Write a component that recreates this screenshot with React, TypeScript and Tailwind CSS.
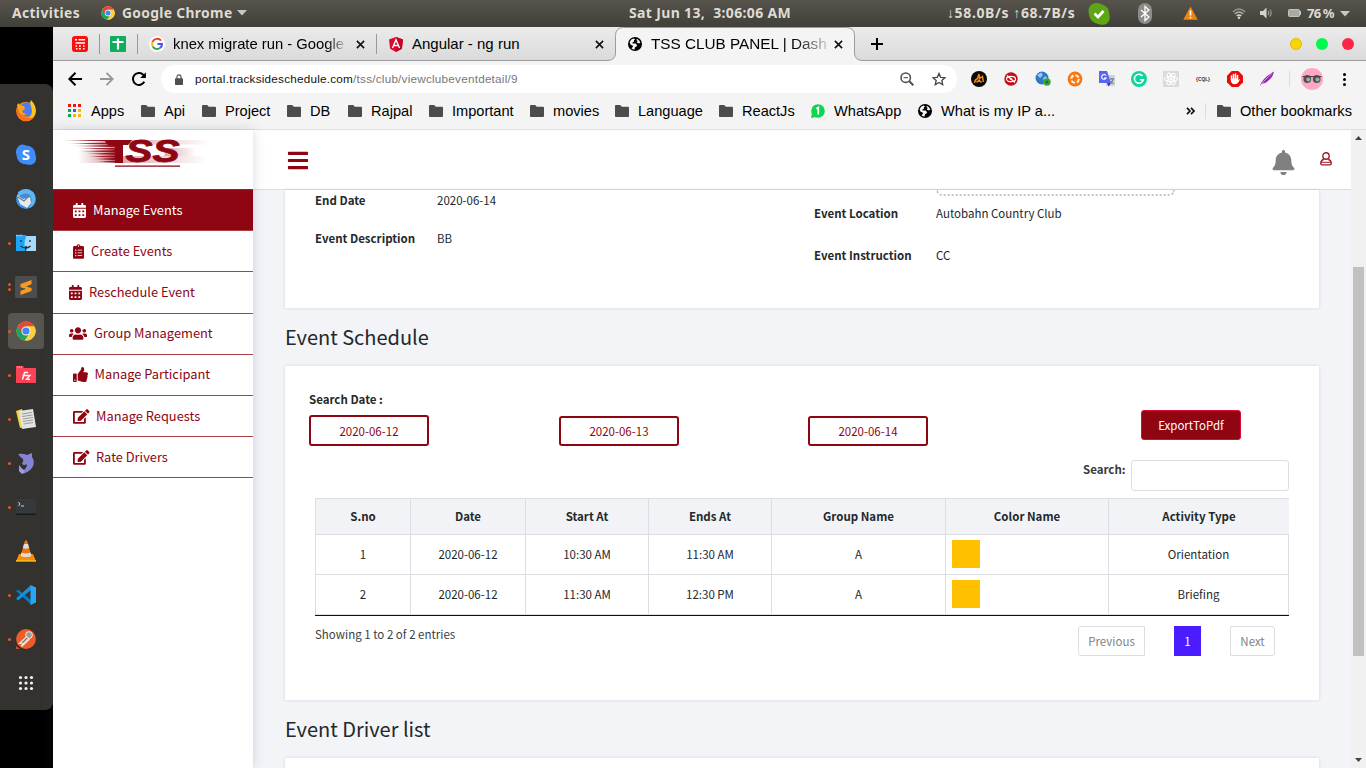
import React from "react";
import {
  FaCalendarAlt,
  FaClipboardList,
  FaUsers,
  FaThumbsUp,
  FaEdit,
  FaBars,
  FaBell,
} from "react-icons/fa";

type IconProps = { className?: string };

/* ---------- shared glyphs ---------- */

const ChromeLogo = ({ className }: IconProps) => (
  <svg viewBox="0 0 48 48" className={className}>
    <circle cx="24" cy="24" r="23" fill="#fbd03f" />
    <path d="M24 24 L4 12.5 A23 23 0 0 0 21 46.8 L33 29 Z" fill="#22a45d" />
    <path d="M24 13 H44.3 A23 23 0 0 0 4 12.5 L14.5 30 Z" fill="#e04a3f" />
    <path d="M24 13 H44.3 A23 23 0 0 1 21 46.8 L33.5 29.5 Z" fill="#fbd03f" />
    <circle cx="24" cy="24" r="11" fill="#f3f3f3" />
    <circle cx="24" cy="24" r="8.6" fill="#4285f4" />
  </svg>
);

const Globe = ({ className }: IconProps) => (
  <svg viewBox="0 0 14 14" className={className}>
    <circle cx="7" cy="7" r="7" fill="#000" />
    <path d="M1.600 5.200 Q2.600 2.400 5.400 1.500 L7.200 2.200 L5.800 3.200 L6.200 4.600 L4.400 5.600 L4.600 6.600 L7.600 6.600 L9.200 8.200 L8.400 9.600 L7 10.200 L6.600 12.500 Q4.500 12.500 3.400 11.200 L5 9.800 L4.600 8.400 L2.600 7.800 Z" fill="#f4f4f4" />
    <path d="M8.800 1.800 Q11.400 2.800 12.300 5.600 L11 6.400 L8.600 5.400 L9.800 4 L8.600 3.200 Z" fill="#f4f4f4" />
  </svg>
);

const Folder = ({ className }: IconProps) => (
  <svg viewBox="0 0 14 12" className={className}>
    <path d="M1 0 H5.2 L6.8 1.7 H13 Q14 1.7 14 2.7 V11 Q14 12 13 12 H1 Q0 12 0 11 V1 Q0 0 1 0 Z" fill="#4c4c4c" />
  </svg>
);

const Cross = () => (
  <svg viewBox="0 0 10 10" className="h-[9px] w-[9px] shrink-0">
    <path d="M1 1 L9 9 M9 1 L1 9" stroke="#111" strokeWidth="1.8" />
  </svg>
);

const Caret = ({ className }: IconProps) => (
  <svg viewBox="0 0 10 6" className={className}>
    <path d="M0 0 H10 L5 5.5 Z" fill="#c9c7c1" />
  </svg>
);

/* ---------- desktop top bar ---------- */

function TopBar() {
  return (
    <header className="flex h-[27px] shrink-0 items-center bg-gradient-to-b from-[#57544c] to-[#403f3a] pb-px font-['Noto_Sans',sans-serif] text-[14px] font-bold leading-[26px] whitespace-pre text-[#dfdbd2]">
      <span className="w-[89px] pl-3 text-[13.800px] tracking-[0.4px]">Activities</span>
      <ChromeLogo className="ml-3 h-[14px] w-[14px]" />
      <span className="ml-[7px] w-[113px] text-[13.800px] tracking-[0.350px]">Google Chrome</span>
      <Caret className="ml-[2px] h-[6px] w-[10px]" />
      <span className="ml-[382px] w-[318px] text-[14px] tracking-[0.35px]">Sat Jun 13,  3:06:06 AM</span>
      <span className="w-[142px] text-[14px] tracking-[0.62px]">↓58.0B/s ↑68.7B/s</span>
      <svg viewBox="0 0 22 22" className="-ml-px mt-px h-[22px] w-[22px]">
        <path d="M5 .5 Q9 -.5 13 1 Q21 3 21.3 11 Q23 17 19 20.5 Q16 22.5 12 21.5 Q2 20 1 11.500 Q-1 4 5 .5 Z" fill="#5fa614" />
        <path d="M6.500 10.500 L10 14 L15.500 8" fill="none" stroke="#fff" strokeWidth="2.600" />
      </svg>
      <svg viewBox="0 0 14 21" className="ml-[28px] h-[21px] w-[14px]">
        <rect width="14" height="21" rx="7" fill="#8c8c8a" />
        <path d="M3 7 L11 14 L7 17.500 V3.500 L11 7 L3 14" fill="none" stroke="#fff" strokeWidth="1.300" />
      </svg>
      <svg viewBox="0 0 15 14" className="ml-[31px] h-[14px] w-[15px]">
        <path d="M7.500 .5 L14.800 13.800 H.2 Z" fill="#f08411" />
        <path d="M7.500 4.500 V9.500 M7.500 10.800 V12.500" stroke="#fff" strokeWidth="1.600" />
      </svg>
      <svg viewBox="0 0 14 11" className="ml-[34px] h-[11px] w-[14px]" fill="none" strokeWidth="1.300">
        <path d="M.8 4 Q7 -2 13.200 4" stroke="#96948e" />
        <path d="M2.800 6 Q7 2 11.200 6" stroke="#b5b3ad" />
        <path d="M4.800 8 Q7 6 9.200 8" stroke="#dfdbd2" />
        <circle cx="7" cy="9.700" r="1.200" fill="#dfdbd2" />
      </svg>
      <svg viewBox="0 0 13 12" className="ml-[14px] h-[12px] w-[13px]">
        <path d="M0 4 H3 L6.500 .5 V11.500 L3 8 H0 Z" fill="#d6d3cb" />
        <path d="M8 4 Q9.500 6 8 8 M9.800 2.500 Q12.500 6 9.800 9.500" fill="none" stroke="#a09e98" strokeWidth="1.200" />
      </svg>
      <svg viewBox="0 0 13 8" className="ml-[15px] h-[8px] w-[13px]">
        <rect x=".5" y=".5" width="11" height="7" rx="1" fill="#aaa8a2" stroke="#c4c2bc" />
        <rect x="12" y="2" width="1" height="4" fill="#c4c2bc" />
      </svg>
      <span className="ml-[6px] w-[29px] text-[13px] tracking-[-0.8px]">76 %</span>
      <Caret className="ml-[4px] mt-px h-[6px] w-[10px]" />
    </header>
  );
}

/* ---------- launcher ---------- */

const dockIcons: { dots: number; active?: boolean; icon: React.ReactNode }[] = [
  {
    dots: 0,
    icon: (
      <>
        <circle cx="11" cy="11.500" r="9.800" fill="#fb8c12" />
        <path d="M1.500 9 Q1 17 7 20 Q14 23 19 17 Q13 19 9 17 Q4 13 5 6 L3 4 Z" fill="#ff6a1b" />
        <path d="M7 4 Q13 0 17 5 L18 11 Q17 17 11 16.500 Q7 16 6 12 Z" fill="#4f7bf0" />
        <path d="M15 3 L16 0 Q22 6 20.500 13 Q19 18 14 18 Q18 14 16.500 8 Z" fill="#ffc51e" />
        <path d="M2 5 L4 3 L5 6 L9 6 L10 9 L7 11 Q8 14 12 14 Q7 17 4 12 Z" fill="#fda51a" />
      </>
    ),
  },
  {
    dots: 0,
    icon: (
      <>
        <path d="M5 1 Q8 0 11 1.500 Q20 2 20.500 11 Q22 15 20 18.500 Q17 22 12 20.500 Q2 20 1.500 11 Q-.5 5 5 1 Z" fill="#3f8cfb" />
        <text x="11" y="16.200" textAnchor="middle" fontSize="15" fontWeight="bold" fill="#fff" fontFamily="Noto Sans, sans-serif">S</text>
      </>
    ),
  },
  {
    dots: 0,
    icon: (
      <>
        <circle cx="11" cy="11" r="10" fill="#3d8fdb" />
        <path d="M3 4 Q11 -2 18 4 Q22 9 19 16 Q17 19 14 20 Q19 12 15 7 Q10 3 3 9 Z" fill="#63b5f2" />
        <path d="M2 7 L8 11 L15 9 L16 15 L12 20 L5 16 Z" fill="#e4eaef" />
        <path d="M3 9 L9 13 L14 8" fill="none" stroke="#6d7883" strokeWidth="1.100" />
      </>
    ),
  },
  {
    dots: 1,
    icon: (
      <>
        <path d="M1 3 H11 L10 19 H1 Z" fill="#1da5f4" />
        <path d="M11 4 H21 V19 H11 L12 14 H9.500 Q9.500 8 11 4 Z" fill="#a6daf9" />
        <path d="M1 3.500 H8" stroke="#8bd3fb" strokeWidth="1.500" strokeDasharray="1.500 .7" />
        <path d="M6 8 V10 M15 8 V10 M5.500 14 Q11 18 15.500 14" fill="none" stroke="#1b3147" strokeWidth="1.300" />
      </>
    ),
  },
  {
    dots: 2,
    icon: (
      <>
        <rect x="0" y="0" width="22" height="22" rx="1.500" fill="#4d4d4f" />
        <path d="M5.500 8 L16.500 4 V8.300 L11 10.500 L16.500 12 V15 L5.500 19 V15 L11 12.800 L5.500 11.200 Z" fill="#f99a22" />
      </>
    ),
  },
  { dots: 1, active: true, icon: null },
  {
    dots: 1,
    icon: (
      <>
        <path d="M1 2 H8 L9 4 H21 V19 H1 Z" fill="#fb4357" />
        <path d="M2 3 H7" stroke="#ffd5da" strokeWidth="1.200" strokeDasharray="1.200 .8" />
        <path d="M7.500 15.500 L9.500 8.500 H13 M7.500 11.500 H12 M11.500 11.500 H15 L11.500 15.300 H15" fill="none" stroke="#fff" strokeWidth="1.300" />
      </>
    ),
  },
  {
    dots: 1,
    icon: (
      <>
        <path d="M1 3 L7 1 L12 18 L5 20 Z" fill="#f5d244" />
        <path d="M4 3 L18 1 L21 19 L7 21 Z" fill="#e3e4e2" />
        <path d="M7 6 L17 4.500 M7 8.500 L17.500 7 M8 11 L18 9.500 M8 13.500 L18 12 M8.500 16 L18 14.500" stroke="#9b9d9b" strokeWidth="1" />
      </>
    ),
  },
  {
    dots: 1,
    icon: (
      <>
        <path d="M3 2 Q8 1 12 3 L17 1 L17 5 Q20 9 18 14 Q16 19 9 21.500 L7 19 Q12 17 12 12 Q9 14 7 12 Q9 9 8 7 Q5 5 3 2 Z" fill="#8683d2" />
        <path d="M4 13 Q6 16 9 18 Q10 21 7 22 L4 19 Z" fill="#9d9be2" />
      </>
    ),
  },
  {
    dots: 1,
    icon: (
      <>
        <rect x="1" y="3" width="20" height="16" rx=".5" fill="#35393c" />
        <rect x="1" y="17.500" width="20" height="1.500" fill="#17191a" />
        <path d="M3.500 6 L5 8 L3.500 10 M6 10 H9" fill="none" stroke="#d5d5d5" strokeWidth="1" />
      </>
    ),
  },
  {
    dots: 0,
    icon: (
      <>
        <path d="M4 14 H18 L21 21.500 H1 Z" fill="#f98d06" />
        <path d="M10 .5 H12 L16.500 16 Q11 19 5.500 16 Z" fill="#ee7404" />
        <path d="M9 4 H13 L14.200 8 Q11 9.500 7.800 8 Z M6.500 12.500 Q11 14.500 15.500 12.500 L16.500 16 Q11 18.500 5.500 16 Z" fill="#dcdcda" />
        <rect x="1" y="20" width="20" height="1.500" fill="#ffb212" />
      </>
    ),
  },
  {
    dots: 1,
    icon: (
      <>
        <path d="M1 7 L3 5.500 L16 16 V20.500 Z" fill="#0a77c4" />
        <path d="M1 14.500 L3 16.500 L16 6 V1 Z" fill="#1490df" />
        <path d="M15.500 1 L21 3.500 V18.500 L15.500 21 Z" fill="#29a5f5" />
      </>
    ),
  },
  {
    dots: 1,
    icon: (
      <>
        <circle cx="11" cy="11" r="9.900" fill="#f15a29" />
        <path d="M1 18 L5 21 H1 Z" fill="#c7502c" />
        <circle cx="14" cy="7" r="3.400" fill="#a09a93" stroke="#f6e4dc" strokeWidth="1" />
        <path d="M12 8.500 L4.500 15.500 L8 15 L6.500 18.500 L14.500 11" fill="#e9c7a9" stroke="#f3eee9" strokeWidth="1.200" />
        <path d="M12 10 L7 15" stroke="#85766a" strokeWidth="1.200" />
      </>
    ),
  },
  {
    dots: 0,
    icon: (
      <g fill="#f2f2f0">
        {[5.5, 11, 16.5].map((y) =>
          [5.5, 11, 16.5].map((x) => <circle key={`${x}-${y}`} cx={x} cy={y} r="1.600" />)
        )}
      </g>
    ),
  },
];

function Dock() {
  return (
    <aside className="w-[53px] shrink-0 bg-black pt-[57px]">
      <div className="flex h-[626px] flex-col rounded-r-lg bg-[#33322e] pt-[5px]">
        {dockIcons.map((d, i) => (
          <div key={i} className="flex h-11 items-center">
            <div className={`ml-2 flex h-9 w-9 items-center rounded ${d.active ? "bg-[#575651]" : ""}`}>
              <div className="flex w-[7px] flex-col gap-[2px]">
                {Array.from({ length: d.dots }, (_, k) => (
                  <span key={k} className="h-[3px] w-[3px] rounded-full bg-[#e95420]" />
                ))}
              </div>
              {d.active ? (
                <ChromeLogo className="ml-[1px] h-5 w-5" />
              ) : (
                <svg viewBox="0 0 22 22" className="h-[22px] w-[22px]">{d.icon}</svg>
              )}
            </div>
          </div>
        ))}
      </div>
    </aside>
  );
}

/* ---------- browser chrome ---------- */

function TabStrip() {
  return (
    <div className="flex h-[34px] shrink-0 items-center bg-gradient-to-b from-[#ebebeb] to-[#dadada] font-['Liberation_Sans',sans-serif] text-[15px] text-black shadow-[inset_0_-1px_0_#9c9c9c]">
      <svg viewBox="0 0 16 16" className="ml-[19px] h-4 w-4">
        <rect width="16" height="16" rx="3" fill="#fa0f0c" />
        <path d="M3 3.800 H5 M6.500 3.800 H13 M3.500 7 H13 M3.500 10 H5 M7 10 H8.800 M11 10 H12.500 M4 12.700 H5.500 M7 12.700 H8.800 M11 12.700 H12.500" stroke="#fff" strokeWidth="1.500" />
      </svg>
      <i className="ml-[11px] h-5 w-px bg-[#999]" />
      <svg viewBox="0 0 16 16" className="ml-[10px] h-4 w-4">
        <rect width="16" height="16" rx="1" fill="#0fae5c" />
        <path d="M2.500 6 H13.500 M8 2.500 V13.500" stroke="#fff" strokeWidth="2.200" />
      </svg>
      <i className="ml-[11px] h-5 w-px bg-[#999]" />
      <svg viewBox="0 0 16 16" className="ml-[11px] h-4 w-4">
        <circle cx="8" cy="8" r="8" fill="#fff" />
        <g fill="none" strokeWidth="2">
          <path d="M12 4.600 A5 5 0 0 0 3.500 6" stroke="#ea3a2d" />
          <path d="M3.500 6 A5 5 0 0 0 3.700 10.500" stroke="#fbbc05" />
          <path d="M3.700 10.500 A5 5 0 0 0 11.300 11.800" stroke="#34a853" />
          <path d="M11.300 11.800 A5 5 0 0 0 13 8 H8.500" stroke="#4a4df5" />
        </g>
      </svg>
      <span className="ml-2 w-[171px] overflow-hidden bg-gradient-to-r from-black from-[88%] to-[#b5b5b5] bg-clip-text text-[14.8px] whitespace-nowrap text-transparent">knex migrate run - Google</span>
      <div className="ml-[12px] flex w-5 items-center"><Cross /></div>
      <i className="h-5 w-px bg-[#999]" />
      <svg viewBox="0 0 14 15" className="ml-[12px] h-[15px] w-[14px]">
        <path d="M7 0 L14 2.400 L12.900 11.700 L7 15 L1.100 11.700 L0 2.400 Z" fill="#dd0a2f" />
        <path d="M7 0 L14 2.400 L12.900 11.700 L7 15 Z" fill="#c3042d" />
        <path d="M3.500 11 L7 2.800 L10.500 11 M4.800 8.500 H9.200" fill="none" stroke="#fff" strokeWidth="1.400" />
      </svg>
      <span className="ml-[9px] w-[183px]">Angular - ng run</span>
      <Cross />
      <div className="relative ml-[3px] h-[34px] w-[258px]">
        <svg viewBox="0 0 258 34" className="absolute inset-0 h-[34px] w-[258px]">
          <path d="M0 34 V33.500 Q8.500 33.500 8.500 26 V8.500 Q8.500 .5 16.500 .5 H239.500 Q247.500 .5 247.500 8.500 V26 Q247.500 33.500 256 33.500 V34 Z" fill="#f4f4f4" />
          <path d="M0 33.500 Q8.500 33.500 8.500 26 V8.500 Q8.500 .5 16.500 .5 H239.500 Q247.500 .5 247.500 8.500 V26 Q247.500 33.500 256 33.500" fill="none" stroke="#9c9c9c" />
        </svg>
        <div className="relative flex h-[34px] items-center">
          <Globe className="ml-[21px] h-[14px] w-[14px]" />
          <span className="ml-[9px] w-[176px] overflow-hidden bg-gradient-to-r from-black from-[78%] to-[#ccc] bg-clip-text text-[15.3px] whitespace-nowrap text-transparent">TSS CLUB PANEL | Dash</span>
          <div className="ml-[7px] flex"><Cross /></div>
        </div>
      </div>
      <svg viewBox="0 0 12 12" className="ml-[6px] h-3 w-3">
        <path d="M6 0 V12 M0 6 H12" stroke="#000" strokeWidth="2" />
      </svg>
      <div className="ml-auto flex gap-[14px] pr-[12px]">
        <i className="h-3 w-3 rounded-full border border-[#e3b900] bg-[#fad400]" />
        <i className="h-3 w-3 rounded-full bg-[#00f94f]" />
        <i className="h-3 w-3 rounded-full bg-[#fb2743]" />
      </div>
    </div>
  );
}

const extensions: React.ReactNode[] = [
  <>
    <circle cx="8" cy="8" r="8" fill="#0a0a0a" />
    <path d="M3.500 12 Q4 8.500 6.500 7.500 L8 3 L8.600 7.500 L11.500 5.500 L12.300 11 M5.500 11.500 L8 9 L10.500 11.500" fill="none" stroke="#f0881a" strokeWidth="1.500" />
  </>,
  <>
    <circle cx="8" cy="8" r="6.700" fill="#c50d16" />
    <ellipse cx="8" cy="8" rx="4.500" ry="2.700" fill="none" stroke="#fff" strokeWidth="1.200" />
    <path d="M4 4.500 L12 11.500" stroke="#fff" strokeWidth="1.300" />
    <circle cx="8" cy="8" r="1.100" fill="#fff" />
  </>,
  <>
    <circle cx="7" cy="7" r="6.500" fill="#2f78c4" />
    <path d="M2 4 L6 1.500 L8 4 L5 7 Z M8 7 L11 5 L12 8 L9 10 Z" fill="#9bc9ee" />
    <circle cx="12" cy="11" r="3.700" fill="#42a820" />
    <circle cx="12" cy="11" r="1.500" fill="#1c5c92" />
  </>,
  <>
    <circle cx="8" cy="8" r="7.400" fill="#fb7511" />
    <circle cx="8" cy="8" r="3.800" fill="none" stroke="#fff" strokeWidth="2" strokeDasharray="4 1.970" />
  </>,
  <>
    <rect x="7" y="4" width="9" height="11" fill="#cfd2d4" />
    <path d="M0 0 H8 L12 12 H0 Z" fill="#5965f3" />
    <path d="M8 12 H12 L9.500 15.500 Z" fill="#3c35b8" />
    <path d="M7 4.500 A2.400 2.400 0 1 0 7.200 7 H5" fill="none" stroke="#fff" strokeWidth="1.100" />
    <path d="M11 8 H15 M13 7 V8 M14.500 8 L11.500 13 M12 10 L14.500 13" fill="none" stroke="#5e7b86" strokeWidth="1" />
  </>,
  <>
    <circle cx="8" cy="8" r="8" fill="#11d3a0" />
    <path d="M11.500 5 A4.500 4.500 0 1 0 12.300 8.800 H9" fill="none" stroke="#fff" strokeWidth="1.500" />
  </>,
  <>
    <rect width="16" height="16" fill="#dadada" />
    <g fill="none" stroke="#fff" strokeWidth="1.100">
      <ellipse cx="8" cy="8" rx="6.500" ry="2.500" />
      <ellipse cx="8" cy="8" rx="6.500" ry="2.500" transform="rotate(60 8 8)" />
      <ellipse cx="8" cy="8" rx="6.500" ry="2.500" transform="rotate(120 8 8)" />
    </g>
    <circle cx="8" cy="8" r="1.300" fill="#fff" />
  </>,
  <>
    <text x="1" y="10.300" fontSize="6" fontWeight="bold" textLength="14" lengthAdjust="spacingAndGlyphs" fill="#333" fontFamily="Liberation Sans, sans-serif">{"{CQL}"}</text>
  </>,
  <>
    <path d="M4.700 0 H11.300 L16 4.700 V11.300 L11.300 16 H4.700 L0 11.300 V4.700 Z" fill="#ea0b0b" />
    <path d="M4.500 8 V5 M6.500 8 V3.500 M8.500 8 V3 M10.500 8 V4.500" stroke="#fff" strokeWidth="1.500" strokeLinecap="round" />
    <path d="M3.800 7.500 H11.200 V9 L12.700 7.800 Q13 9 11.500 11 Q10.500 13.300 7.500 13.300 Q4 13 3.800 9 Z" fill="#fff" />
  </>,
  <>
    <path d="M1 15 Q3 7 15 .5 Q14 6 10 9 Q6 13 3 12.500 Z" fill="#9a1fb5" />
    <path d="M1 15 Q5 9 13 2.500" fill="none" stroke="#e2b3ee" strokeWidth=".8" />
  </>,
];

function Toolbar() {
  return (
    <div className="flex h-9 shrink-0 items-center bg-[#f4f4f4] font-['Liberation_Sans',sans-serif]">
      <svg viewBox="0 0 14 14" className="ml-[15px] h-[14px] w-[14px]" fill="none" stroke="#000" strokeWidth="2">
        <path d="M14 7 H1.500 M7.500 .8 L1.300 7 L7.500 13.200" />
      </svg>
      <svg viewBox="0 0 14 14" className="ml-[18px] h-[14px] w-[14px]" fill="none" stroke="#969696" strokeWidth="1.800">
        <path d="M0 7 H12.500 M6.500 .8 L12.700 7 L6.500 13.200" />
      </svg>
      <svg viewBox="0 0 14 14" className="ml-[18px] h-[14px] w-[14px]">
        <path d="M12.300 9.800 A6 6 0 1 1 11.200 2.700 L12.500 4" fill="none" stroke="#000" strokeWidth="2" />
        <path d="M13.900 .3 V6 H8.200 Z" fill="#000" />
      </svg>
      <div className="ml-[15px] flex h-7 w-[796px] items-center rounded-full bg-white text-[11.700px] tracking-[0.240px] text-[#777]">
        <svg viewBox="0 0 8 11" className="ml-[14px] h-[11px] w-2">
          <path d="M2 5 V3 Q2 .8 4 .8 Q6 .8 6 3 V5" fill="none" stroke="#555" strokeWidth="1.200" />
          <rect y="4.300" width="8" height="6.700" rx=".7" fill="#4f4f4f" />
        </svg>
        <span className="ml-[12px] whitespace-nowrap"><span className="text-[#111]">portal.tracksideschedule.com</span>/tss/club/viewclubeventdetail/9</span>
        <svg viewBox="0 0 14 14" className="ml-auto h-[14px] w-[14px]" fill="none" stroke="#505050" strokeWidth="1.600">
          <circle cx="5.700" cy="5.700" r="4.700" />
          <path d="M3.500 5.700 H8" strokeWidth="1.100" />
          <path d="M9 9 L13.300 13.300" strokeWidth="2" />
        </svg>
        <svg viewBox="0 0 14 14" className="mr-[11px] ml-[18px] h-[14px] w-[14px]">
          <path d="M7 1.400 L8.700 5.300 L13 5.700 L9.800 8.500 L10.700 12.700 L7 10.500 L3.300 12.700 L4.200 8.500 L1 5.700 L5.300 5.300 Z" fill="none" stroke="#444" strokeWidth="1.300" />
        </svg>
      </div>
      <div className="ml-[14px] flex gap-4">
        {extensions.map((e, i) => (
          <svg key={i} viewBox="0 0 16 16" className="h-4 w-4 overflow-visible">{e}</svg>
        ))}
      </div>
      <i className="ml-[14px] h-4 w-px bg-[#dcdcdc]" />
      <svg viewBox="0 0 22 22" className="ml-[11px] h-[22px] w-[22px]">
        <circle cx="11" cy="11" r="11" fill="#fda9c6" />
        <circle cx="6.300" cy="11" r="3.900" fill="#4d5457" />
        <circle cx="15.700" cy="11" r="3.900" fill="#4d5457" />
        <path d="M1.500 8.500 H20.500" stroke="#55404a" strokeWidth="1" />
        <circle cx="7.300" cy="11.500" r="2" fill="#9cadb0" />
        <circle cx="16.500" cy="11.500" r="2" fill="#9cadb0" />
      </svg>
      <div className="ml-[20px] flex flex-col gap-[2px]">
        <i className="h-[3px] w-[3px] rounded-full bg-black" />
        <i className="h-[3px] w-[3px] rounded-full bg-black" />
        <i className="h-[3px] w-[3px] rounded-full bg-black" />
      </div>
    </div>
  );
}

const folders = [
  { label: "Api", width: "w-[61px]" },
  { label: "Project", width: "w-[85px]" },
  { label: "DB", width: "w-[61px]" },
  { label: "Rajpal", width: "w-[81px]" },
  { label: "Important", width: "w-[101px]" },
  { label: "movies", width: "w-[85px]" },
  { label: "Language", width: "w-[104px]" },
  { label: "ReactJs", width: "w-[92px]" },
];

function Bookmarks() {
  return (
    <div className="flex h-[33px] shrink-0 items-center border-b border-[#e0e0e0] bg-[#f4f4f4] pb-1 pl-[15px] font-['Liberation_Sans',sans-serif] text-[14.6px] whitespace-nowrap text-black">
      <div className="flex w-[73px] items-center gap-[10px]">
        <svg viewBox="0 0 13 13" className="h-[13px] w-[13px]">
          <path d="M0 1.500 H3 M5 1.500 H8 M10 1.500 H13" stroke="#f4150f" strokeWidth="3" />
          <path d="M0 6.500 H3" stroke="#0ca850" strokeWidth="3" />
          <path d="M5 6.500 H8" stroke="#4a4df5" strokeWidth="3" />
          <path d="M10 6.500 H13 M5 11.500 H8 M10 11.500 H13" stroke="#f2b707" strokeWidth="3" />
          <path d="M0 11.500 H3" stroke="#0ca850" strokeWidth="3" />
        </svg>
        <span className="pt-[2px]">Apps</span>
      </div>
      {folders.map((f) => (
        <div key={f.label} className={`flex items-center gap-[9px] ${f.width}`}>
          <Folder className="h-3 w-[14px]" />
          <span className="pt-[2px]">{f.label}</span>
        </div>
      ))}
      <div className="flex w-[107px] items-center gap-[9px]">
        <svg viewBox="0 0 14 14" className="h-[14px] w-[14px]">
          <circle cx="7" cy="7" r="6.800" fill="#0bd64e" />
          <path d="M0 14 L1 9 L5 13 Z" fill="#0bd64e" />
          <path d="M5.300 4.700 L7.300 3.500 V10.500" fill="none" stroke="#fff" strokeWidth="1.700" />
        </svg>
        <span className="pt-[2px]">WhatsApp</span>
      </div>
      <div className="flex w-[268px] items-center gap-[9px]">
        <Globe className="h-[14px] w-[14px]" />
        <span className="pt-[2px]">What is my IP a...</span>
      </div>
      <svg viewBox="0 0 9 8" className="h-2 w-[9px]" fill="none" stroke="#111" strokeWidth="1.700">
        <path d="M1 .8 L4 4 L1 7.200 M5 .8 L8 4 L5 7.200" />
      </svg>
      <i className="ml-[10px] h-4 w-px bg-[#dcdcdc]" />
      <Folder className="ml-[11px] h-3 w-[14px]" />
      <span className="ml-[9px] pt-[2px]">Other bookmarks</span>
    </div>
  );
}

/* ---------- application ---------- */

const streaks = [
  "M2 1 L50 1 V2.500 Z",
  "M9 4.500 L54 3.200 V5.700 Z",
  "M13 7 L60 5.800 V8.300 Z",
  "M18 9.600 L60 8.400 V10.900 Z",
  "M20 12.200 L60 11 V13.500 Z",
  "M26 14.800 L60 13.600 V16.100 Z",
  "M28 17.400 L60 16.200 V18.700 Z",
  "M33 20 L60 18.800 V21.300 Z",
  "M38 22.600 L60 21.400 V23.800 Z",
];

function Logo() {
  return (
    <svg viewBox="0 0 160 30" className="mt-[9px] ml-[5px] h-[30px] w-[160px] overflow-visible">
      <defs>
        <linearGradient id="fadeL" x1="0" x2="1">
          <stop offset="0" stopColor="#8f0512" stopOpacity="0.100" />
          <stop offset=".5" stopColor="#8f0512" stopOpacity=".8" />
          <stop offset="1" stopColor="#8f0512" />
        </linearGradient>
        <linearGradient id="fadeR" x1="0" x2="1">
          <stop offset="0" stopColor="#8f0512" stopOpacity=".35" />
          <stop offset=".5" stopColor="#8f0512" stopOpacity=".16" />
          <stop offset="1" stopColor="#8f0512" stopOpacity="0" />
        </linearGradient>
        <linearGradient id="haze" x1="0" x2="1">
          <stop offset="0" stopColor="#8f0512" stopOpacity="0" />
          <stop offset="1" stopColor="#8f0512" stopOpacity=".45" />
        </linearGradient>
      </defs>
      <path d="M64 1 H153 V5.500 H64 Z" fill="url(#fadeR)" />
      <path d="M64 17 H150 V24 H64 Z" fill="url(#fadeR)" />
      <path d="M110 9 H138 V17 H106 Z" fill="url(#fadeR)" />
      <path d="M20 11 H60 V24 H20 Z" fill="url(#haze)" />
      <g fill="url(#fadeL)">
        {streaks.map((d) => (
          <path key={d} d={d} />
        ))}
      </g>
      <path d="M46 1 H74 L70 6 H65 V24 H57 V6 H50 Z" fill="#8f0512" />
      <text x="67.500" y="23.300" fontFamily="Liberation Sans, sans-serif" fontWeight="bold" fontStyle="italic" fontSize="30.500" textLength="54" lengthAdjust="spacingAndGlyphs" fill="#8f0512" stroke="#8f0512" strokeWidth="0.800">SS</text>
      <path d="M57 27.200 H122" stroke="#8f0512" strokeWidth="1.300" />
    </svg>
  );
}

const menu = [
  { label: "Manage Events", Icon: FaCalendarAlt, icon: "w-[13px] h-[15px]", box: "h-[41px] pl-5 gap-[7px]", active: true },
  { label: "Create Events", Icon: FaClipboardList, icon: "w-[11px] h-[15px]", box: "h-[41px] pl-5 gap-[7px]" },
  { label: "Reschedule Event", Icon: FaCalendarAlt, icon: "w-[13px] h-[15px]", box: "h-[42px] pb-px pl-4 gap-[7px]" },
  { label: "Group Management", Icon: FaUsers, icon: "w-[18px] h-[15px]", box: "h-[41px] pb-[2px] pl-4 gap-[7px]" },
  { label: "Manage Participant", Icon: FaThumbsUp, icon: "w-[15px] h-[15px]", box: "h-[41px] pb-[2px] pl-5 gap-[6.500px]" },
  { label: "Manage Requests", Icon: FaEdit, icon: "w-[16.500px] h-[15px]", box: "h-[41px] pl-5 gap-[6.500px]" },
  { label: "Rate Drivers", Icon: FaEdit, icon: "w-[16.500px] h-[15px]", box: "h-[41px] pl-5 gap-[6.500px]" },
];

function Sidebar() {
  return (
    <nav className="z-10 w-[200px] shrink-0 bg-white shadow-[0_0_12px_rgba(60,70,100,0.2)]">
      <div className="flex h-[60px] border-b border-[#4a4450]">
        <Logo />
      </div>
      {menu.map(({ label, Icon, icon, box, active }) => (
        <a
          key={label}
          className={`flex items-center border-b border-[#a84046] text-[12.850px] leading-5 ${box} ${active ? "bg-[#8f0512] text-white" : "text-[#8f0512]"}`}
        >
          <Icon className={icon} />
          {label}
        </a>
      ))}
    </nav>
  );
}

function PageHeader() {
  return (
    <div className="flex h-[60px] shrink-0 items-center border-b border-[#dadde4] bg-white">
      <FaBars className="mt-[2px] ml-[34px] h-[23px] w-[22px] text-[#8f0512]" />
      <FaBell className="mt-[5px] ml-auto h-[25px] w-[23px] text-[#808080]" />
      <svg viewBox="0 0 12 14" className="mr-[19px] mb-px ml-[25px] h-[14px] w-[12px]" fill="none" stroke="#9b1c29" strokeWidth="1.400">
        <circle cx="6" cy="4" r="3.200" />
        <path d="M3.800 7.200 Q.8 8 .8 11.600 Q.8 12.900 2 12.900 H10 Q11.200 12.900 11.200 11.600 Q11.200 8 8.200 7.200" />
        <path d="M1 10.300 H11" strokeWidth="1" />
      </svg>
    </div>
  );
}

const Field = ({ label, value, className }: { label: string; value: string; className: string }) => (
  <div className={`flex leading-[18px] ${className}`}>
    <b className="w-[122px]">{label}</b>
    <span>{value}</span>
  </div>
);

const rows = [
  ["1", "2020-06-12", "10:30 AM", "11:30 AM", "A", "", "Orientation"],
  ["2", "2020-06-12", "11:30 AM", "12:30 PM", "A", "", "Briefing"],
];
const heads = ["S.no", "Date", "Start At", "Ends At", "Group Name", "Color Name", "Activity Type"];
const cols = "grid grid-cols-[95px_115px_123px_123px_174px_163px_180px]";
const dateButton = "flex w-[120px] items-center justify-center rounded-[3px] border-2 border-[#8f0512] text-[#8f0512]";
const cardShadow = "shadow-[0_0_3px_rgba(60,70,90,0.16)]";

function ScheduleCard() {
  return (
    <section className={`mx-8 h-[334px] w-[1034px] shrink-0 bg-white pt-6 ${cardShadow}`}>
      <b className="ml-6 block leading-[18px]">Search Date :</b>
      <div className="ml-6 flex h-[52px]">
        <button className={`${dateButton} mt-[7px] h-[31px] pt-[2px]`}>2020-06-12</button>
        <button className={`${dateButton} mt-2 ml-[130px] h-[30px] pt-[2px]`}>2020-06-13</button>
        <button className={`${dateButton} mt-2 ml-[129px] h-[30px] pt-[2px]`}>2020-06-14</button>
        <button className="mt-[2px] ml-[213px] flex h-[30px] w-[100px] items-center justify-center rounded-[3px] border border-[#dc0a38] bg-[#8f0512] pt-[2px] text-white">ExportToPdf</button>
      </div>
      <div className="mr-[30px] flex h-[38px] justify-end gap-[5.500px]">
        <b className="leading-[18px] text-[#383b40]">Search:</b>
        <input className="h-[31px] w-[158px] rounded-[3px] border border-[#dcdee4] bg-white" />
      </div>
      <div className="mr-[30px] ml-[30px] border-b border-[#111]">
        <div className={`${cols} h-9 border-t border-l border-[#dcdee4] bg-[#f2f3f6] text-center font-bold leading-[35px]`}>
          {heads.map((h, i) => (
            <div key={h} className={i < 6 ? "border-r border-[#dcdee4]" : ""}>{h}</div>
          ))}
        </div>
        {rows.map((r) => (
          <div key={r[0]} className={`${cols} h-10 w-[974px] border-t border-l border-[#dcdee4] text-center leading-[39px]`}>
            {r.map((c, i) => (
              <div key={i} className="border-r border-[#dcdee4]">
                {i === 5 ? <div className="mt-[5px] ml-[6px] h-7 w-7 bg-[#ffc000]" /> : c}
              </div>
            ))}
          </div>
        ))}
        <div className="h-px bg-[#dcdee4]" />
      </div>
      <div className="mr-11 ml-[30px] flex pt-[10px] text-[#3b3e43]">
        <span className="leading-[17px]">Showing 1 to 2 of 2 entries</span>
        <div className="ml-auto flex gap-[29px] text-center leading-7 text-[#7d838a]">
          <div className="h-[30px] w-[67px] rounded-l-[3px] border border-[#dcdee4]">Previous</div>
          <div className="h-[30px] w-[27px] bg-[#4a1dfe] pt-px text-white">1</div>
          <div className="h-[30px] w-[45px] rounded-r-[3px] border border-[#dcdee4]">Next</div>
        </div>
      </div>
    </section>
  );
}

function Scrollbar() {
  return (
    <div className="flex w-[15px] shrink-0 flex-col items-center bg-[#f1f1f1] py-[6px]">
      <svg viewBox="0 0 7 4" className="h-1 w-[7px]"><path d="M0 4 L3.500 0 L7 4 Z" fill="#444" /></svg>
      <div className="mt-[127px] h-[389px] w-[11px] bg-[#c1c1c1]" />
      <svg viewBox="0 0 7 4" className="mt-auto h-1 w-[7px]"><path d="M0 0 L3.500 4 L7 0 Z" fill="#444" /></svg>
    </div>
  );
}

export default function App() {
  return (
    <div className="flex h-[768px] w-[1366px] flex-col overflow-hidden bg-black">
      <TopBar />
      <div className="flex min-h-0 flex-1">
        <Dock />
        <div className="flex w-[1313px] flex-col">
          <TabStrip />
          <Toolbar />
          <Bookmarks />
          <div className="flex min-h-0 flex-1 font-['Noto_Sans_CJK_JP',sans-serif] text-[11.500px] text-[#23282c]">
            <Sidebar />
            <div className="flex w-[1098px] flex-col overflow-hidden bg-[#f2f4f8]">
              <PageHeader />
              <section className={`mx-8 flex h-[118px] w-[1034px] shrink-0 bg-white pl-[30px] ${cardShadow}`}>
                <div className="w-[499px]">
                  <Field label="End Date" value="2020-06-14" className="mt-[1px]" />
                  <Field label="Event Description" value="BB" className="mt-[20px]" />
                </div>
                <div>
                  <div className="ml-[122px] h-[6px] w-[239px] rounded-b-lg border-2 border-t-0 border-dotted border-[#c4c4c4]" />
                  <Field label="Event Location" value="Autobahn Country Club" className="mt-[8px]" />
                  <Field label="Event Instruction" value="CC" className="mt-[24px]" />
                </div>
              </section>
              <h2 className="mt-[14px] ml-8 h-[44px] shrink-0 text-[20px] leading-[30px]">Event Schedule</h2>
              <ScheduleCard />
              <h2 className="mt-[14px] ml-8 h-[44px] shrink-0 text-[20px] leading-[30px]">Event Driver list</h2>
              <section className={`mx-8 h-[60px] w-[1034px] shrink-0 bg-white ${cardShadow}`} />
            </div>
            <Scrollbar />
          </div>
        </div>
      </div>
    </div>
  );
}
